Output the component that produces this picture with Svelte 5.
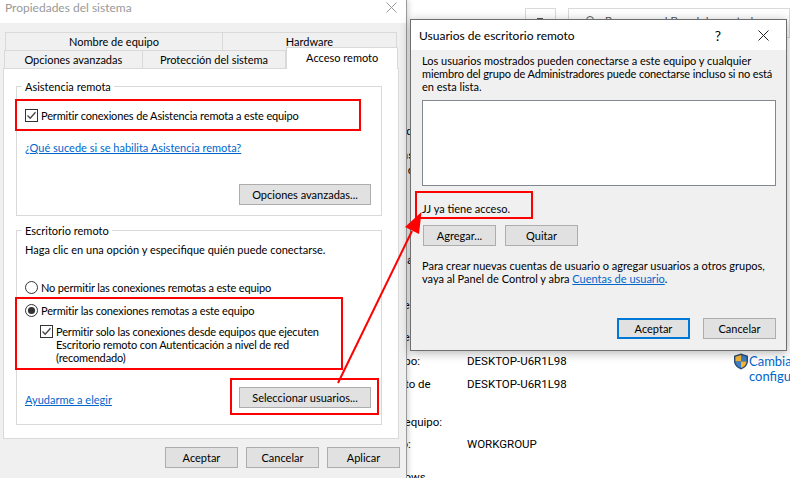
<script>
  // rows of the Sistema window behind the two dialogs, mostly covered by them
  const behind = [
    { gap: 125, label: 'Procesador de equipo:' },
    { gap: 11, label: 'Memoria RAM instalada t' },
    { gap: 2, label: 'Tipo de sistema de o' },
    { gap: 77, label: 'Lápiz y entrada táctil la' },
    { gap: 32, label: 'Configuración de domini' },
    { gap: 19, label: 'Configuración de nombr' },
    { gap: 11, label: 'Nombre de equipo:', value: 'DESKTOP-U6R1L98' },
    { gap: 10, label: 'Nombre completo de', value: 'DESKTOP-U6R1L98' },
    { gap: 0, label: 'equipo:' },
    { gap: 12, label: 'Descripción del equipo:' },
    { gap: 9, label: 'Grupo de trabajo:', value: 'WORKGROUP' },
    { gap: 20, label: 'Edición de Windows' }
  ];
</script>

{#snippet checkbox()}
  <svg class="tick" width="13" height="13" viewBox="0 0 13 13">
    <rect x="0.5" y="0.5" width="12" height="12" fill="#fff" stroke="#333" />
    <path d="M2.5 6.5 L5.2 9.2 L10.5 3.2" fill="none" stroke="#444" stroke-width="1.3" />
  </svg>
{/snippet}

{#snippet radio(on)}
  <svg class="tick" width="13" height="13" viewBox="0 0 13 13">
    <circle cx="6.5" cy="6.5" r="6" fill="#fff" stroke="#333" />
    {#if on}<circle cx="6.5" cy="6.5" r="3.6" fill="#333" />{/if}
  </svg>
{/snippet}

<div class="desktop">
  <section class="behind">
    <div class="toolbar">
      <div class="nav-btn"><span></span></div>
      <div class="search">
        <svg width="12" height="12" viewBox="0 0 12 12">
          <circle cx="5" cy="5" r="3.5" fill="none" stroke="#555" />
        </svg>
        <span>Buscar en el Panel de control</span>
      </div>
    </div>
    <div class="info">
      {#each behind as row}
        <div class="info-row" style="margin-top:{row.gap}px">
          <span class="info-label">{row.label}</span>
          {#if row.value}<span>{row.value}</span>{/if}
        </div>
      {/each}
    </div>
    <div class="change">
      <svg width="16" height="17" viewBox="0 0 16 17">
        <path d="M8 0.5 L15 2.8 V8 C15 12 12 15 8 16.5 C4 15 1 12 1 8 V2.8 Z" fill="#2b4a78" />
        <path d="M8 2 V8.5 H2.4 V3.8 Z" fill="#f2b632" />
        <path d="M8 2 L13.6 3.8 V8.5 H8 Z" fill="#3f7fc4" />
        <path d="M8 8.5 H13.6 C13.4 11.4 11.2 13.8 8 15 Z" fill="#f2b632" />
        <path d="M8 8.5 H2.4 C2.6 11.4 4.8 13.8 8 15 Z" fill="#3f7fc4" />
      </svg>
      <a href="#top">Cambiar<br />configuración</a>
    </div>
  </section>

  <section class="sys">
    <header class="sys-title">
      <span>Propiedades del sistema</span>
      <svg width="11" height="11" viewBox="0 0 11 11">
        <path d="M0.5 0.5 L10.5 10.5 M10.5 0.5 L0.5 10.5" stroke="#999" fill="none" />
      </svg>
    </header>

    <div class="tabs">
      <div class="tab-row top">
        <div class="tab">Nombre de equipo</div>
        <div class="tab">Hardware</div>
      </div>
      <div class="tab-row bottom">
        <div class="tab">Opciones avanzadas</div>
        <div class="tab">Protección del sistema</div>
        <div class="tab active">Acceso remoto</div>
      </div>
    </div>

    <div class="panel">
      <fieldset class="assist">
        <legend>Asistencia remota</legend>
        <div class="option first">{@render checkbox()}<span>Permitir conexiones de Asistencia remota a este equipo</span></div>
        <a class="link help" href="#top">¿Qué sucede si se habilita Asistencia remota?</a>
        <div class="end"><button>Opciones avanzadas...</button></div>
      </fieldset>

      <fieldset class="remote">
        <legend>Escritorio remoto</legend>
        <p class="hint">Haga clic en una opción y especifique quién puede conectarse.</p>
        <div class="option no">{@render radio(false)}<span>No permitir las conexiones remotas a este equipo</span></div>
        <div class="option yes">{@render radio(true)}<span>Permitir las conexiones remotas a este equipo</span></div>
        <div class="option nla">{@render checkbox()}<span>Permitir solo las conexiones desde equipos que ejecuten<br />Escritorio remoto con Autenticación a nivel de red<br />(recomendado)</span></div>
        <div class="between">
          <a class="link" href="#top">Ayudarme a elegir</a>
          <button>Seleccionar usuarios...</button>
        </div>
      </fieldset>
    </div>

    <footer class="sys-actions">
      <button>Aceptar</button>
      <button>Cancelar</button>
      <button>Aplicar</button>
    </footer>
  </section>

  <section class="users">
    <header class="users-title">
      <span>Usuarios de escritorio remoto</span>
      <span class="question">?</span>
      <svg width="11" height="11" viewBox="0 0 11 11">
        <path d="M0.5 0.5 L10.5 10.5 M10.5 0.5 L0.5 10.5" stroke="#222" fill="none" />
      </svg>
    </header>
    <div class="users-body">
      <p>Los usuarios mostrados pueden conectarse a este equipo y cualquier<br /><span class="tight">miembro del grupo de Administradores puede conectarse incluso si no está</span><br />en esta lista.</p>
      <div class="listbox"></div>
      <p class="access">JJ ya tiene acceso.</p>
      <div class="user-btns">
        <button>Agregar...</button>
        <button>Quitar</button>
      </div>
      <p class="accounts">Para crear nuevas cuentas de usuario o agregar usuarios a otros grupos,<br />vaya al Panel de Control y abra <a class="link" href="#top">Cuentas de usuario</a>.</p>
      <div class="user-actions">
        <button class="default">Aceptar</button>
        <button>Cancelar</button>
      </div>
    </div>
  </section>

  <!-- annotations drawn on top of the screenshot -->
  <div class="mark m1"></div>
  <div class="mark m2"></div>
  <div class="mark m3"></div>
  <div class="mark m4"></div>
  <svg class="arrow" width="790" height="478" viewBox="0 0 790 478">
    <path d="M338 383 L412 231" stroke="#f00" stroke-width="2" fill="none" />
    <path d="M421.5 212 L405 227 L419 234 Z" fill="#f00" />
  </svg>
</div>

<style>
  :global(body) {
    margin: 0;
    font-family: Lato, Roboto, sans-serif;
    font-size: 11px;
    line-height: 13px;
    color: #000;
  }

  .desktop {
    position: relative;
    width: 790px;
    height: 478px;
    overflow: hidden;
    background: #fff;
  }

  p {
    margin: 0;
    white-space: nowrap;
  }

  a {
    color: #0066cc;
  }

  button {
    width: 73px;
    height: 21px;
    padding: 0;
    box-sizing: border-box;
    font: inherit;
    color: #000;
    background: #e1e1e1;
    border: 1px solid #adadad;
  }

  .tick {
    flex: none;
  }

  .tight {
    letter-spacing: -0.14px;
  }

  /* window behind */
  .behind {
    position: absolute;
    left: 300px;
    top: 0;
    width: 490px;
    height: 478px;
    font-family: Roboto, sans-serif;
    font-size: 11.5px;
  }

  .toolbar {
    display: flex;
    gap: 12px;
    margin: 8px 0 0 225px;
    height: 30px;
  }

  .nav-btn {
    width: 31px;
    box-sizing: border-box;
    border: 1px solid #d9d9d9;
    padding: 9px 0 0 11px;
  }

  .nav-btn span {
    display: block;
    width: 6px;
    height: 2px;
    background: #555;
  }

  .search {
    flex: 1;
    display: flex;
    gap: 8px;
    padding: 6px 0 0 16px;
    border: 1px solid #d9d9d9;
    color: #555;
  }

  .info {
    position: absolute;
    left: 23px;
    top: 0;
  }

  .info-row {
    display: flex;
    white-space: nowrap;
    height: 13px;
  }

  .info-label {
    width: 144px;
  }

  .change {
    position: absolute;
    left: 433px;
    top: 353px;
    display: flex;
    font-family: Lato, sans-serif;
    font-size: 13px;
    line-height: 15px;
    white-space: nowrap;
  }

  .change a {
    padding-top: 1px;
    text-decoration: none;
  }

  /* system properties */
  .sys {
    position: absolute;
    left: 0;
    top: 0;
    width: 407px;
    height: 478px;
    box-sizing: border-box;
    background: #f0f0f0;
    border-right: 1px solid #9a9a9a;
    box-shadow: 2px 0 5px rgba(0, 0, 0, 0.15);
  }

  .sys-title {
    height: 23px;
    box-sizing: border-box;
    background: #fff;
    display: flex;
    align-items: center;
    justify-content: space-between;
    padding: 0 9px 8px 5px;
    color: #999;
    font-size: 12px;
  }

  .tabs {
    position: relative;
    margin: 9px 0 0 5px;
    width: 393px;
  }

  .tab-row {
    display: flex;
    height: 18px;
  }

  .tab {
    box-sizing: border-box;
    display: flex;
    align-items: center;
    justify-content: center;
    height: 18px;
    border: 1px solid #d9d9d9;
    border-bottom: 0;
    background: #f0f0f0;
  }

  .top .tab:nth-child(1) { width: 218px; }
  .top .tab:nth-child(2) { width: 174px; border-left: 0; }

  .bottom {
    margin-left: -1px;
  }

  .bottom .tab:nth-child(1) { width: 139px; }
  .bottom .tab:nth-child(2) { width: 144px; border-left: 0; }

  .tab.active {
    position: relative;
    z-index: 1;
    width: 112px;
    height: 22px;
    margin-top: -3px;
    padding: 0 0 3px;
    background: #fff;
  }

  .panel {
    margin-left: 3px;
    width: 396px;
    height: 371px;
    box-sizing: border-box;
    padding: 10px 16px 0 12px;
    background: #fff;
    border: 1px solid #d9d9d9;
  }

  fieldset {
    margin: 0;
    padding: 0 10px 0 8px;
    border: 1px solid #d9d9d9;
    box-sizing: border-box;
    min-width: 0;
  }

  legend {
    padding: 1px 3px 0;
    margin-left: -3px;
    height: 15px;
    box-sizing: border-box;
  }

  .assist {
    height: 137px;
  }

  .remote {
    height: 202px;
    margin-top: 7px;
  }

  .option {
    display: flex;
    gap: 3px;
    white-space: nowrap;
    letter-spacing: -0.15px;
  }

  .first {
    margin-top: 15px;
  }

  .link {
    color: #0066cc;
  }

  .help {
    display: block;
    margin-top: 19px;
  }

  .end {
    display: flex;
    justify-content: flex-end;
    margin-top: 30px;
  }

  .end button,
  .between button {
    width: 132px;
  }

  .hint {
    margin-top: 5px;
  }

  .no {
    margin-top: 25px;
  }

  .yes {
    margin-top: 10px;
  }

  .nla {
    margin: 8px 0 0 15px;
  }

  .between {
    display: flex;
    justify-content: space-between;
    align-items: center;
    margin-top: 23px;
  }

  .between a {
    margin-top: 4px;
  }

  .sys-actions {
    display: flex;
    justify-content: flex-end;
    gap: 8px;
    padding: 8px 6px 0 0;
  }

  /* remote desktop users */
  .users {
    position: absolute;
    left: 410px;
    top: 19px;
    width: 377px;
    height: 332px;
    box-sizing: border-box;
    background: #f0f0f0;
    border: 1px solid #6e6e6e;
    box-shadow: 0 2px 10px rgba(0, 0, 0, 0.3);
  }

  .users-title {
    display: flex;
    align-items: center;
    height: 30px;
    padding: 0 17px 0 8px;
    background: #fff;
    font-size: 12px;
  }

  .question {
    margin-left: auto;
    margin-right: 37px;
    font-size: 14px;
  }

  .users-body {
    padding: 4px 10px 0 11px;
  }

  .listbox {
    height: 86px;
    margin-top: 7px;
    box-sizing: border-box;
    background: #fff;
    border: 1px solid #828790;
  }

  .access {
    margin-top: 16px;
  }

  .user-btns {
    display: flex;
    gap: 9px;
    margin: 10px 0 0 1px;
  }

  .accounts {
    margin-top: 13px;
  }

  .user-actions {
    display: flex;
    justify-content: flex-end;
    gap: 13px;
    margin-top: 33px;
  }

  button.default {
    border: 2px solid #0078d7;
  }

  /* annotations */
  .mark {
    position: absolute;
    box-sizing: border-box;
    border: 2px solid #f00;
  }

  .m1 { left: 15px; top: 99px; width: 346px; height: 32px; }
  .m2 { left: 15px; top: 297px; width: 328px; height: 73px; }
  .m3 { left: 230px; top: 378px; width: 149px; height: 37px; }
  .m4 { left: 415px; top: 191px; width: 118px; height: 28px; }

  .arrow {
    position: absolute;
    left: 0;
    top: 0;
    pointer-events: none;
  }
</style>
